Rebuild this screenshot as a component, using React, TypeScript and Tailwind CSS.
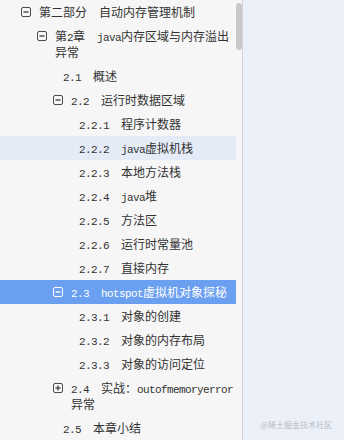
import React from 'react'

type Node = {
  text: string
  level: 0 | 1 | 2 | 3
  icon?: 'minus' | 'plus'
  state?: 'hover' | 'selected'
}

const S = '\u3000'

const nodes: Node[] = [
  { text: `第二部分${S}自动内存管理机制`, level: 0, icon: 'minus' },
  { text: `第2章${S}java内存区域与内存溢出异常`, level: 1, icon: 'minus' },
  { text: `2.1${S}概述`, level: 2 },
  { text: `2.2${S}运行时数据区域`, level: 2, icon: 'minus' },
  { text: `2.2.1${S}程序计数器`, level: 3 },
  { text: `2.2.2${S}java虚拟机栈`, level: 3, state: 'hover' },
  { text: `2.2.3${S}本地方法栈`, level: 3 },
  { text: `2.2.4${S}java堆`, level: 3 },
  { text: `2.2.5${S}方法区`, level: 3 },
  { text: `2.2.6${S}运行时常量池`, level: 3 },
  { text: `2.2.7${S}直接内存`, level: 3 },
  { text: `2.3${S}hotspot虚拟机对象探秘`, level: 2, icon: 'minus', state: 'selected' },
  { text: `2.3.1${S}对象的创建`, level: 3 },
  { text: `2.3.2${S}对象的内存布局`, level: 3 },
  { text: `2.3.3${S}对象的访问定位`, level: 3 },
  { text: `2.4${S}实战：outofmemoryerror异常`, level: 2, icon: 'plus' },
  { text: `2.5${S}本章小结`, level: 2 },
]

const indent = ['pl-[21px]', 'pl-[37px]', 'pl-[53px]', 'pl-[69px]']

// ascii runs get a narrow mono face, the rest stays in the CJK face
const Label: React.FC<{ text: string }> = ({ text }) => {
  const parts = text.split(/([\x20-\x7E]+)/).filter((p) => p !== '')
  return (
    <>
      {parts.map((p, i) =>
        /^[\x20-\x7E]+$/.test(p) ? (
          <span key={i} className="font-['Liberation_Mono',monospace] text-[11px] leading-none tracking-[-0.6px]">
            {p}
          </span>
        ) : (
          <span key={i} className="leading-none">
            {p}
          </span>
        ),
      )}
    </>
  )
}

const Toggle: React.FC<{ kind: 'minus' | 'plus'; light: boolean }> = ({ kind, light }) => {
  const c = light ? '#ffffff' : '#4a4a4a'
  return (
    <svg width="10" height="10" viewBox="0 0 10 10" className="mt-[3px] mr-[8px] shrink-0">
      <rect x="0.5" y="0.5" width="9" height="9" rx="1.5" fill="none" stroke={c} strokeWidth="1" />
      <line x1="2.5" y1="5" x2="7.5" y2="5" stroke={c} strokeWidth="1.4" />
      {kind === 'plus' && <line x1="5" y1="2.5" x2="5" y2="7.5" stroke={c} strokeWidth="1.4" />}
    </svg>
  )
}

const Row: React.FC<{ node: Node }> = ({ node }) => {
  const bg =
    node.state === 'selected' ? 'bg-[#6b9ff0] text-white' : node.state === 'hover' ? 'bg-[#e4ebf7]' : ''
  return (
    <div className={`flex items-start py-1 ${indent[node.level]} ${bg}`}>
      {node.icon ? (
        <Toggle kind={node.icon} light={node.state === 'selected'} />
      ) : (
        <div className="w-[10px] shrink-0" />
      )}
      <div className="flex-1 min-w-0 leading-4">
        <Label text={node.text} />
      </div>
    </div>
  )
}

const App: React.FC = () => {
  return (
    <div className="relative flex w-[344px] h-[440px] overflow-hidden font-['Noto_Sans_CJK_SC',sans-serif] text-[12px] text-[#333333]">
      <div className="relative w-[243px] h-full bg-[#f6f6f6] border-r border-[#d2d4d8]">
        <div className="w-[236px]">
          {nodes.map((n, i) => (
            <Row node={n} key={i} />
          ))}
        </div>
        <div className="absolute left-[236px] top-[3px] w-[6px] h-[47px] rounded-full bg-[#c9c9c9]" />
      </div>
      <div className="flex-1 h-full bg-[#ecf0f8]" />
      <div className="absolute right-[12px] bottom-[11px] text-[8px] leading-none text-[#b7bcc6]">
        @稀土掘金技术社区
      </div>
    </div>
  )
}
export default App
